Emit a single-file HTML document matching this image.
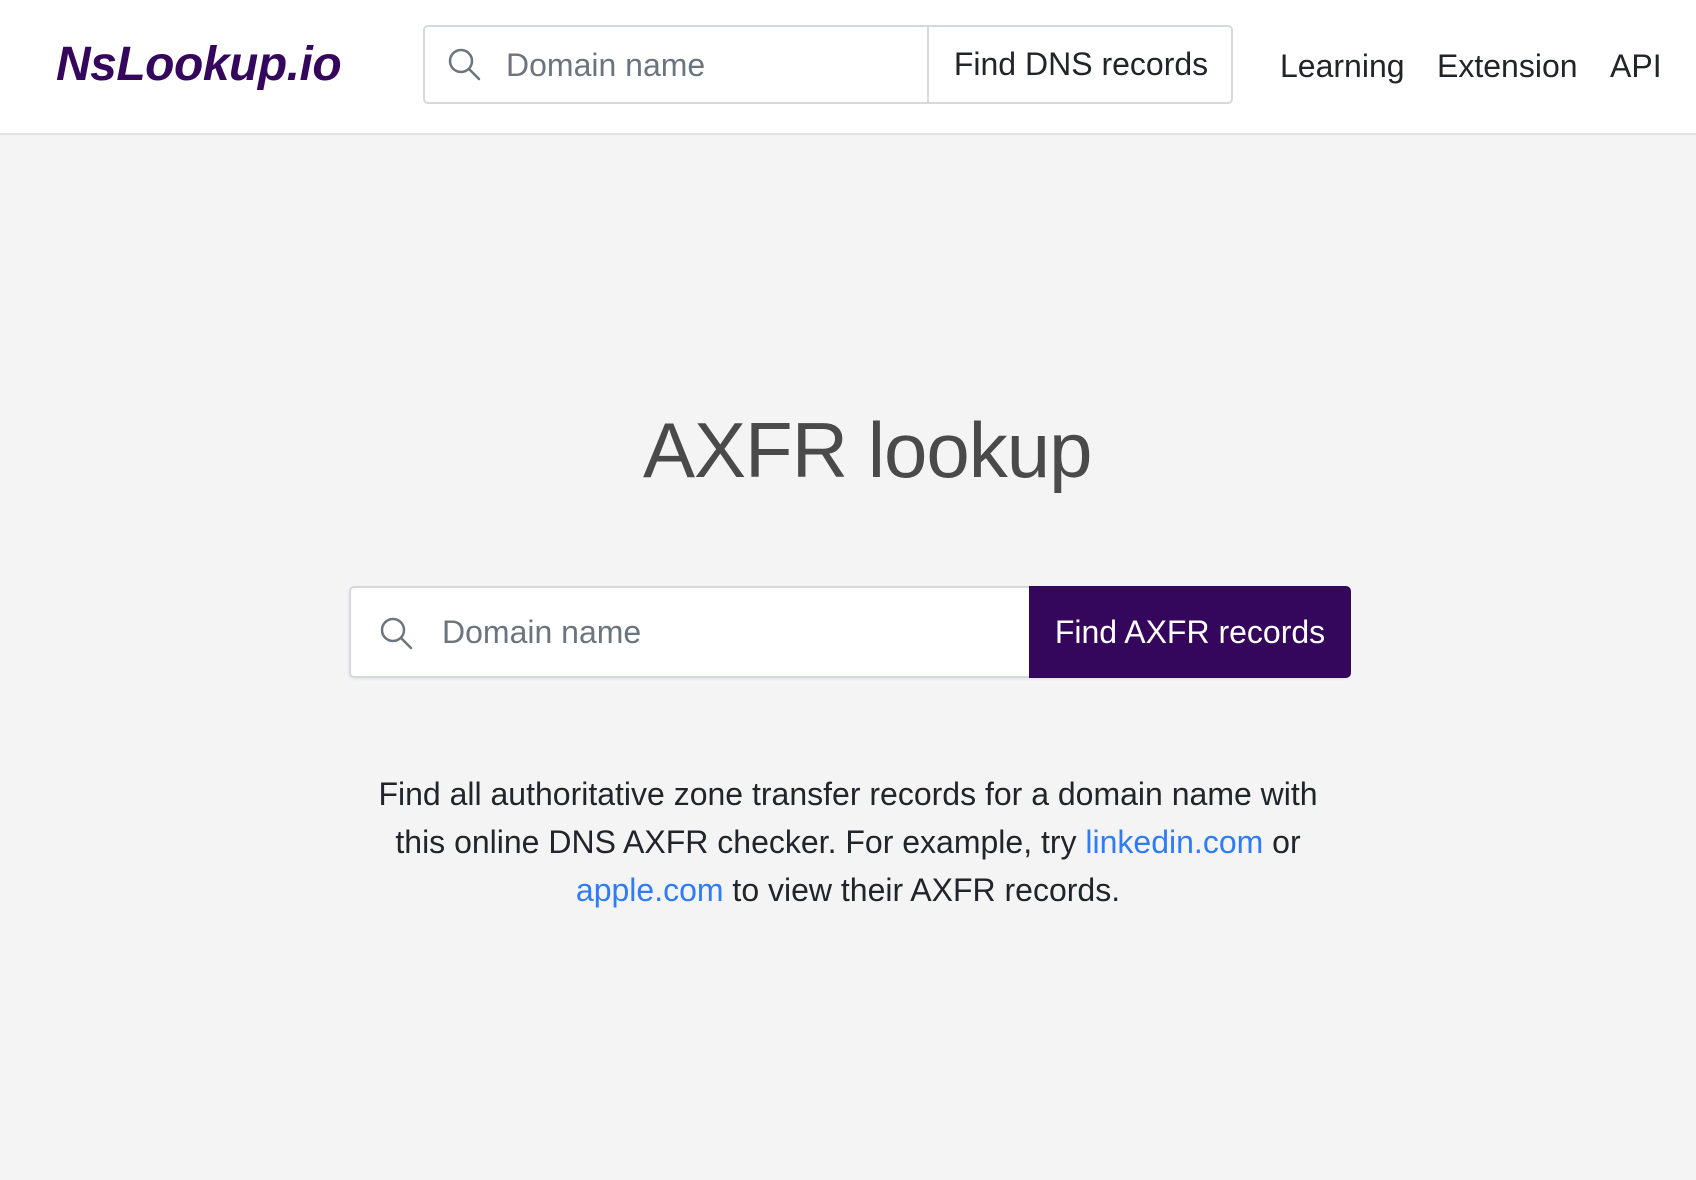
<!DOCTYPE html>
<html><head><meta charset="utf-8"><style>
*{box-sizing:border-box;margin:0;padding:0}
body{width:1696px;height:1180px;background:#f4f4f4;font-family:"Liberation Sans",sans-serif;color:#212529;position:relative;overflow:hidden}
.hdr{position:absolute;left:0;top:0;width:1696px;height:135px;background:#fff;border-bottom:2px solid #dee2e6}
.logo{position:absolute;left:56px;top:37px;font-size:48px;font-weight:bold;font-style:italic;color:#35075c;letter-spacing:-0.5px}
.hs{position:absolute;left:423px;top:25px;width:810px;height:79px;border:2px solid #d5d8dc;border-radius:5px;background:#fff}
.hs .ph{position:absolute;left:81px;top:20px;font-size:32px;color:#6c757d}
.hs .btn{position:absolute;left:502px;top:0;width:306px;height:75px;border-left:2px solid #d5d8dc;font-size:32px;color:#212529;text-align:center;line-height:75px}
.nav{position:absolute;top:48px;font-size:32px;color:#212529}
h1{position:absolute;left:643px;top:405px;font-size:78px;font-weight:normal;color:#4a4a4a;white-space:nowrap;letter-spacing:-1px}
.ms{position:absolute;left:349px;top:586px;width:1000px;height:92px;border:2px solid #d5d8dc;border-radius:5px;background:#fff;box-shadow:0 1px 3px rgba(0,0,0,.08)}
.ms .ph{position:absolute;left:91px;top:26px;font-size:32px;color:#6c757d}
.ms .btn{position:absolute;left:678px;top:-2px;width:322px;height:92px;background:#35075c;color:#fff;border-radius:0 5px 5px 0;font-size:32px;text-align:center;line-height:92px}
p{position:absolute;left:358px;top:770px;width:980px;text-align:center;font-size:32px;line-height:48px}
a{color:#2f7cf6;text-decoration:none}
</style></head><body>
<div class="hdr">
<div class="logo">NsLookup.io</div>
<div class="hs"><svg style="position:absolute;left:22px;top:20px" width="36" height="36" viewBox="0 0 36 36" fill="none" stroke="#6c757d" stroke-width="2.5"><circle cx="14" cy="14" r="11"/><path d="M22 22l10 10" stroke-linecap="round"/></svg><span class="ph">Domain name</span><div class="btn">Find DNS records</div></div>
<div class="nav" style="left:1280px">Learning</div>
<div class="nav" style="left:1437px">Extension</div>
<div class="nav" style="left:1610px">API</div>
</div>
<h1>AXFR lookup</h1>
<div class="ms"><svg style="position:absolute;left:28px;top:28px" width="36" height="36" viewBox="0 0 36 36" fill="none" stroke="#6c757d" stroke-width="2.5"><circle cx="14" cy="14" r="11"/><path d="M22 22l10 10" stroke-linecap="round"/></svg><span class="ph">Domain name</span><div class="btn">Find AXFR records</div></div>
<p>Find all authoritative zone transfer records for a domain name with this online DNS AXFR checker. For example, try <a>linkedin.com</a> or <a>apple.com</a> to view their AXFR records.</p>
</body></html>
